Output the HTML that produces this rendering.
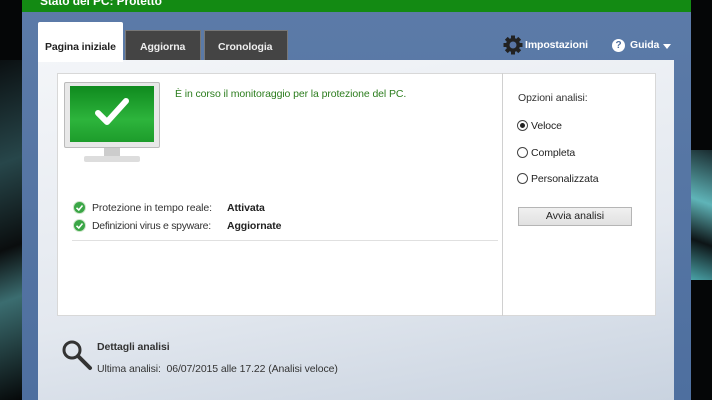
<!DOCTYPE html>
<html><head><style>
*{margin:0;padding:0;box-sizing:border-box}
body{width:712px;height:400px;overflow:hidden;background:#050607;font-family:"Liberation Sans",sans-serif;position:relative}
.abs{position:absolute}
.t{font-size:10.5px;color:#222;white-space:nowrap;letter-spacing:-0.1px}
</style></head><body>
<div class="abs" style="left:0;top:60px;width:22px;height:340px;background:linear-gradient(160deg,#0b1012 0%,#27464a 30%,#0a0d0e 55%,#3b6d70 70%,#060809 100%)"></div>
<div class="abs" style="left:691px;top:150px;width:21px;height:130px;background:linear-gradient(200deg,#1a2c30,#5fb4b8 40%,#0d1416 70%,#4aa3a8)"></div>
<div class="abs" style="left:22px;top:0;width:669px;height:400px;background:linear-gradient(#5c7ba8,#4e6f9f)"></div>
<div class="abs" style="left:22px;top:0;width:669px;height:12px;background:#138a13"></div>
<div class="abs t" style="left:40px;top:-6px;color:#fff;font-weight:bold;font-size:12px">Stato del PC: Protetto</div>
<div class="abs" style="left:38px;top:60px;width:636px;height:340px;background:linear-gradient(170deg,#f3f5f8 0%,#e3e8ef 60%,#c9d3e0 100%)"></div>
<div class="abs" style="left:38px;top:22px;width:85px;height:40px;background:#fff;border-radius:2px 2px 0 0"></div>
<div class="abs t" style="left:45px;top:41px;font-weight:bold">Pagina iniziale</div>
<div class="abs" style="left:125px;top:30px;width:76px;height:30px;background:#444;border:1px solid #777;border-bottom:none"></div>
<div class="abs t" style="left:140px;top:41px;color:#eee;font-weight:bold">Aggiorna</div>
<div class="abs" style="left:204px;top:30px;width:84px;height:30px;background:#444;border:1px solid #777;border-bottom:none"></div>
<div class="abs t" style="left:218px;top:41px;color:#eee;font-weight:bold">Cronologia</div>
<svg class="abs" style="left:503px;top:35px" width="20" height="20" viewBox="0 0 20 20"><g fill="#222"><circle cx="10" cy="10" r="7"/><rect x="8" y="0.5" width="4" height="19"/><rect x="0.5" y="8" width="19" height="4"/><rect x="8" y="0.5" width="4" height="19" transform="rotate(45 10 10)"/><rect x="8" y="0.5" width="4" height="19" transform="rotate(-45 10 10)"/></g><circle cx="10" cy="10" r="3.5" fill="#5874a3"/></svg>
<div class="abs t" style="left:525px;top:39px;color:#fff;font-weight:bold">Impostazioni</div>
<div class="abs" style="left:612px;top:39px;width:13px;height:13px;border-radius:50%;background:#fff;color:#4e6f9f;font-size:10px;font-weight:bold;text-align:center;line-height:13px">?</div>
<div class="abs t" style="left:630px;top:39px;color:#fff;font-weight:bold">Guida</div>
<div class="abs" style="left:663px;top:44px;width:0;height:0;border-left:4px solid transparent;border-right:4px solid transparent;border-top:5px solid #fff"></div>
<div class="abs" style="left:57px;top:73px;width:599px;height:243px;background:#fff;border:1px solid #d8d8d8"></div>
<div class="abs" style="left:502px;top:73px;width:1px;height:243px;background:#d0d0d0"></div>
<div class="abs" style="left:64px;top:82px;width:96px;height:66px;background:#e8e8e8;border:1px solid #bbb;border-radius:2px"></div>
<div class="abs" style="left:70px;top:86px;width:84px;height:56px;background:linear-gradient(#0f8a1e,#2db43c 60%,#1d9c2b)"></div>
<svg class="abs" style="left:92px;top:94px" width="40" height="36" viewBox="0 0 40 36"><path d="M6 19 L15 28 L34 7" stroke="#fff" stroke-width="6" fill="none" stroke-linecap="round" stroke-linejoin="round"/></svg>
<div class="abs" style="left:104px;top:148px;width:16px;height:8px;background:#ccc"></div>
<div class="abs" style="left:84px;top:156px;width:56px;height:6px;background:#ddd;border-radius:2px"></div>
<div class="abs t" style="left:175px;top:88px;color:#2c7d1e">È in corso il monitoraggio per la protezione del PC.</div>
<svg class="abs" style="left:73px;top:201px" width="13" height="13"><circle cx="6.5" cy="6.5" r="6" fill="#3aa646" stroke="#cde5c9"/><path d="M3.5 6.8 L5.8 9 L9.5 4.5" stroke="#fff" stroke-width="1.6" fill="none"/></svg>
<div class="abs t" style="left:92px;top:202px;color:#333">Protezione in tempo reale:</div>
<div class="abs t" style="left:227px;top:202px;font-weight:bold">Attivata</div>
<svg class="abs" style="left:73px;top:219px" width="13" height="13"><circle cx="6.5" cy="6.5" r="6" fill="#3aa646" stroke="#cde5c9"/><path d="M3.5 6.8 L5.8 9 L9.5 4.5" stroke="#fff" stroke-width="1.6" fill="none"/></svg>
<div class="abs t" style="left:92px;top:220px;color:#333;letter-spacing:-0.3px">Definizioni virus e spyware:</div>
<div class="abs t" style="left:227px;top:220px;font-weight:bold">Aggiornate</div>
<div class="abs" style="left:72px;top:240px;width:426px;height:1px;background:#e0e0e0"></div>
<div class="abs t" style="left:518px;top:92px;color:#333">Opzioni analisi:</div>
<div class="abs" style="left:517px;top:120px;width:11px;height:11px;border:1px solid #444;border-radius:50%;background:#fff"></div>
<div class="abs" style="left:520px;top:123px;width:5px;height:5px;border-radius:50%;background:#222"></div>
<div class="abs t" style="left:531px;top:120px">Veloce</div>
<div class="abs" style="left:517px;top:147px;width:11px;height:11px;border:1px solid #444;border-radius:50%;background:#fff"></div>
<div class="abs t" style="left:531px;top:147px">Completa</div>
<div class="abs" style="left:517px;top:173px;width:11px;height:11px;border:1px solid #444;border-radius:50%;background:#fff"></div>
<div class="abs t" style="left:531px;top:173px">Personalizzata</div>
<div class="abs" style="left:518px;top:207px;width:114px;height:19px;background:linear-gradient(#f0f0f0,#e1e1e1);border:1px solid #b5b5b5;font-size:10.5px;text-align:center;line-height:17px;color:#222">Avvia analisi</div>
<svg class="abs" style="left:60px;top:338px" width="34" height="34"><circle cx="12" cy="12" r="8" stroke="#333" stroke-width="3" fill="none"/><path d="M18 18 L30 30" stroke="#333" stroke-width="4" stroke-linecap="round"/></svg>
<div class="abs t" style="left:97px;top:341px;font-weight:bold;color:#333">Dettagli analisi</div>
<div class="abs t" style="left:97px;top:363px;color:#333">Ultima analisi:&nbsp; 06/07/2015 alle 17.22 (Analisi veloce)</div>
</body></html>
